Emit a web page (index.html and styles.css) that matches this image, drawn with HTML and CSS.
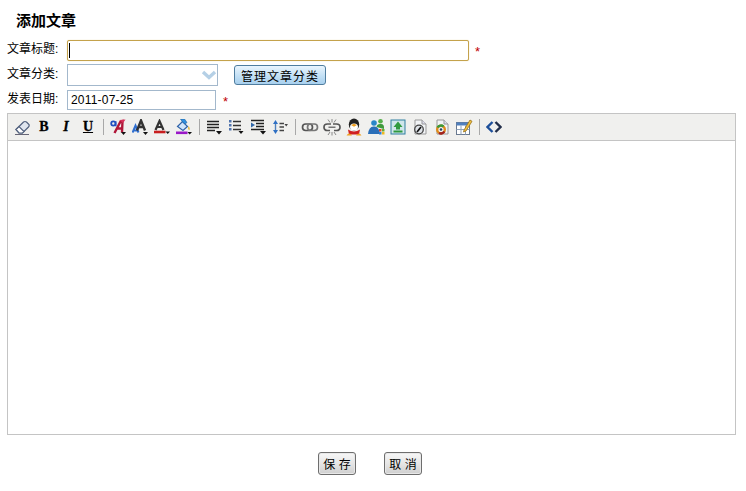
FILE: index.html
```html
<!DOCTYPE html>
<html lang="zh-CN">
<head>
<meta charset="utf-8">
<title>添加文章</title>
<link rel="stylesheet" href="styles.css">
</head>
<body>
<form class="page">
  <h1 class="title">添加文章</h1>
  <div class="row row-title">
    <label class="label">文章标题:</label>
    <input class="field field-title" type="text">
    <span class="req req-title">*</span>
  </div>
  <div class="row row-cat">
    <label class="label">文章分类:</label>
    <div class="select">
      <svg width="16" height="10" viewBox="0 0 16 10"><path d="M2 2 L8 7.500 L14 2" fill="none" stroke="#b5d0e6" stroke-width="3.400"/></svg>
    </div>
    <button class="btn-manage" type="button">管理文章分类</button>
  </div>
  <div class="row row-date">
    <label class="label">发表日期:</label>
    <input class="field field-date" type="text" value="2011-07-25">
    <span class="req req-date">*</span>
  </div>

  <div class="editor">
    <div class="toolbar">
      <span class="tool"><svg viewBox="0 0 16 16"><path d="M1 15.500 H15" stroke="#667" stroke-width="1"/><path d="M2 10.500 L9.500 3 Q11 2 12.500 3 L15 5.500 Q15.500 7 14.500 8 L8.500 14 H5 Z" fill="#dfe5ee" stroke="#4f5f7c" stroke-width="1.200"/><path d="M2 10.500 L5 7.500 L10 12.500 L8.500 14 H5 Z" fill="#fff" stroke="#4f5f7c" stroke-width="1.200"/></svg></span>
      <span class="tool tool-text tool-b">B</span>
      <span class="tool tool-text tool-i">I</span>
      <span class="tool tool-text tool-u">U</span>
      <span class="sep"></span>
      <span class="tool"><svg viewBox="0 0 16 16"><path d="M4.500 14 L10.500 2.500 L12.500 2 L12 13.500 M7 9.500 H13" fill="none" stroke="#b01638" stroke-width="2.400"/><path d="M9.500 1 L15.500 0.500 L13 4 Z" fill="#d8315a"/><circle cx="3.300" cy="4.500" r="2.100" fill="none" stroke="#1f50c0" stroke-width="1.800"/><path d="M5.800 2.200 V7.200" stroke="#1f50c0" stroke-width="1.500"/><path d="M11 13 H16 L13.500 16 Z" fill="#111"/></svg></span>
      <span class="tool"><svg viewBox="0 0 16 16"><path d="M0.500 13.500 L3.500 6.500 L6.500 13.500 M1.500 11.500 H5.500" fill="none" stroke="#2f6fd0" stroke-width="2"/><path d="M5 11.500 L9 1.500 L13 11.500 M6.500 8 H11.500" fill="none" stroke="#333" stroke-width="2.400"/><path d="M11 13 H16 L13.500 16 Z" fill="#111"/></svg></span>
      <span class="tool"><svg viewBox="0 0 16 16"><path d="M1.500 11 L5.500 2 L9.500 11 M3 8 H8" fill="none" stroke="#333" stroke-width="2.200"/><path d="M0 13 H11.500" stroke="#c81e1e" stroke-width="2.600"/><path d="M11.500 12.500 H16 L13.700 15 Z" fill="#111"/></svg></span>
      <span class="tool"><svg viewBox="0 0 16 16"><path d="M1.500 7.500 L6.500 2.500 L11.500 7.500 L7 11.500 Z" fill="#cfe4fa" stroke="#2f62a8" stroke-width="1.200"/><path d="M6.500 3 L4.500 0 H8.500 L11 3.500 L9 5 Z" fill="#2f8fe0" stroke="#1f5f9c" stroke-width=".6"/><path d="M12.500 7 Q14.500 9.500 13.500 11 Q11.500 11 12.500 7Z" fill="#e8b020"/><path d="M0 13.800 H11.500" stroke="#9a18c8" stroke-width="2.600"/><path d="M11.500 13 H16 L13.700 15.500 Z" fill="#111"/></svg></span>
      <span class="sep"></span>
      <span class="tool"><svg viewBox="0 0 16 16"><path d="M1 2.500 H13 M1 5.500 H13 M1 8.500 H13 M1 11.500 H9" stroke="#222" stroke-width="1.500"/><path d="M10 12 H16 L13 15.500 Z" fill="#111"/></svg></span>
      <span class="tool"><svg viewBox="0 0 16 16"><path d="M5 2.500 H13 M5 6.500 H13 M5 10.500 H13" stroke="#333" stroke-width="1.400"/><path d="M1 1 h2.500 v2.500 h-2.500z M1 5 h2.500 v2.500 h-2.500z M1 9 h2.500 v2.500 h-2.500z" fill="#4f73ad"/><path d="M10.500 12 H15.500 L13 15 Z" fill="#111"/></svg></span>
      <span class="tool"><svg viewBox="0 0 16 16"><path d="M1 1.500 H14 M6 4.500 H14 M6 7.500 H14 M1 10.500 H14" stroke="#222" stroke-width="1.500"/><path d="M1 3.500 L5 6 L1 8.500 Z" fill="#2f66a8"/><path d="M10 12 H16 L13 15.500 Z" fill="#111"/></svg></span>
      <span class="tool"><svg viewBox="0 0 16 16"><path d="M3.500 3 V13" stroke="#4f80bd" stroke-width="1.400"/><path d="M1 5 L3.500 1 L6 5 Z M1 11 L3.500 15 L6 11 Z" fill="#2f70c4"/><path d="M7.500 4.500 H12 M7.500 8 H12 M7.500 11.500 H12" stroke="#444" stroke-width="1.300"/><path d="M12.500 5 H16 L14.200 7.500 Z" fill="#444"/></svg></span>
      <span class="sep"></span>
      <span class="tool tool-wide"><svg viewBox="0 0 18 18"><rect x="1.500" y="6" width="10" height="6.500" rx="3.200" fill="none" stroke="#555" stroke-width="1.700"/><rect x="6.500" y="6" width="10" height="6.500" rx="3.200" fill="none" stroke="#777" stroke-width="1.700"/></svg></span>
      <span class="tool tool-wide"><svg viewBox="0 0 18 18"><path d="M8 6 H4.500 Q1 6 1 9.200 Q1 12.500 4.500 12.500 H7 M10 6 H13.500 Q17 6 17 9.200 Q17 12.500 13.500 12.500 H11" fill="none" stroke="#555" stroke-width="1.700"/><path d="M5.500 9.200 H12.500" stroke="#555" stroke-width="1.200"/><path d="M9 1 V4.500 M9 14 V17.500 M5 1.500 L7 4.500 M13 1.500 L11 4.500 M5 17 L7 14 M13 17 L11 14" stroke="#888"/></svg></span>
      <span class="tool tool-wide"><svg viewBox="0 0 18 18"><ellipse cx="9" cy="6.500" rx="5.200" ry="6" fill="#222"/><ellipse cx="9" cy="9" rx="4" ry="3.600" fill="#fff"/><path d="M6 7 L9 8.800 L12 7 L9 5.800 Z" fill="#f0a020"/><path d="M3 11.500 Q9 15.500 15 11.500 L14 16.500 H4 Z" fill="#d02020"/><path d="M1.500 17.500 Q4 13.500 7 17.500 Z M11 17.500 Q14 13.500 16.500 17.500 Z" fill="#f0a020"/></svg></span>
      <span class="tool tool-wide"><svg viewBox="0 0 18 18"><circle cx="7" cy="5" r="2.800" fill="#2a86c8"/><path d="M1 16 Q2 8 7 8.500 Q12 8 13 16 Z" fill="#2a6fb8"/><circle cx="13.500" cy="3.300" r="2.300" fill="#55b04a"/><path d="M9.500 9 Q10 5.500 14 6 Q17.500 6 17 11 Z" fill="#3f9a3c"/><rect x="12" y="11" width="2.500" height="2.500" fill="#e04a2a"/><rect x="15" y="11" width="2.500" height="2.500" fill="#66b030"/><rect x="12" y="14" width="2.500" height="2.500" fill="#2f7fd0"/><rect x="15" y="14" width="2.500" height="2.500" fill="#f0b820"/></svg></span>
      <span class="tool"><svg viewBox="0 0 16 16"><rect x="1" y="1" width="14" height="14" fill="#cfe6ea" stroke="#2f7f9f"/><path d="M8 2.500 L12.500 8 H10 V10.500 H6 V8 H3.500 Z" fill="#2f9a3f"/><path d="M3.500 12.500 H12.500" stroke="#2f9a3f" stroke-width="2"/></svg></span>
      <span class="tool"><svg viewBox="0 0 16 16"><path d="M3 1 H10 L14 5 V15 H3 Z" fill="#f2f4f6" stroke="#999"/><path d="M10 1 V5 H14" fill="#dde" stroke="#999"/><circle cx="7" cy="10.500" r="4.300" fill="#dfe3e8" stroke="#444" stroke-width="1.300"/><path d="M5 13 L9 8" stroke="#111" stroke-width="1.700"/></svg></span>
      <span class="tool"><svg viewBox="0 0 16 16"><path d="M3 1 H10 L14 5 V15 H3 Z" fill="#f2f4f6" stroke="#999"/><path d="M10 1 V5 H14" fill="#dde" stroke="#999"/><circle cx="7" cy="10.500" r="3.800" fill="none" stroke="#e08a1a" stroke-width="2.400"/><path d="M3.500 8.500 A4 4 0 0 1 9.500 7.500" fill="none" stroke="#3a9a3a" stroke-width="2.400"/><path d="M10.300 12.500 A4 4 0 0 1 5 14" fill="none" stroke="#a02020" stroke-width="2.400"/><circle cx="7" cy="10.500" r="1.300" fill="#246"/></svg></span>
      <span class="tool tool-wide"><svg viewBox="0 0 18 18"><rect x="1.500" y="4.500" width="13" height="12" fill="#fff" stroke="#6a7a90"/><path d="M1.500 4.500 h13 v3 h-13z" fill="#4f7fbd"/><path d="M1.500 11.500 H14.500 M6 7.500 V16.500 M10.500 7.500 V16.500" stroke="#8fa3ba"/><path d="M9 12 L15 2 L17 3.300 L11 13 L8.500 14 Z" fill="#f0c040" stroke="#987018" stroke-width=".8"/></svg></span>
      <span class="sep"></span>
      <span class="tool"><svg viewBox="0 0 16 16"><path d="M6.500 3 L1.500 8 L6.500 13" fill="none" stroke="#1d4f9a" stroke-width="2.400"/><path d="M9.500 3 L14.500 8 L9.500 13" fill="none" stroke="#222e4a" stroke-width="2.400"/></svg></span>
    </div>
    <div class="editor-body"></div>
  </div>

  <div class="actions">
    <button class="btn-action" type="button">保 存</button>
    <button class="btn-action" type="button">取 消</button>
  </div>
</form>
</body>
</html>
```

FILE: styles.css
```css
* { box-sizing: border-box; }

html, body {
  margin: 0;
  background: #fff;
}

body {
  font-family: "Liberation Sans", "Noto Sans CJK SC", sans-serif;
  font-size: 12px;
  color: #000;
  overflow: hidden;
}

.page {
  width: 746px;
  height: 491px;
  padding: 12px 10px 0 7px;
}

.title {
  margin: 0 0 0 9px;
  height: 17px;
  font-size: 15px;
  line-height: 17px;
  font-weight: bold;
}

.row {
  display: flex;
  align-items: center;
}

.row-title { margin-top: 11px; height: 21px; }
.row-cat { margin-top: 3px; height: 22px; }
.row-date { margin-top: 4px; height: 20px; }

.label {
  width: 60px;
  flex: none;
  line-height: 16px;
  padding-bottom: 3px;
  height: 19px;
}

.field {
  height: 20px;
  padding: 1px 3px;
  font: 12px "Liberation Sans", "Noto Sans CJK SC", sans-serif;
  letter-spacing: .2px;
  color: #000;
  border: 1px solid #a3b8cc;
  background: #fff;
  outline: none;
}

.field-title {
  width: 402px;
  height: 21px;
  border: 1px solid #c4a24c;
  border-radius: 2px;
  box-shadow: 0 0 1px #e0c880;
  background: linear-gradient(#000, #000) 1px 2px / 1px 15px no-repeat #fff;
}

.field-date { width: 149px; }

.req {
  color: #c00000;
  font-size: 13px;
  line-height: 13px;
  padding-top: 2px;
}

.req-title { margin-left: 6px; }
.req-date { margin-left: 7px; }

.select {
  width: 151px;
  height: 22px;
  display: flex;
  align-items: center;
  justify-content: flex-end;
  border: 1px solid #a3b8cc;
  background: #fff;
}

.btn-manage {
  margin-left: 16px;
  width: 92px;
  height: 20px;
  padding: 0;
  font: 12px "Liberation Sans", "Noto Sans CJK SC", sans-serif;
  letter-spacing: 1px;
  color: #000;
  border: 1px solid #4f7d9f;
  border-radius: 3px;
  background: linear-gradient(#eaf5fd, #c3e0f5 55%, #a8d0ee);
}

.editor {
  width: 729px;
  height: 322px;
  margin-top: 3px;
  display: flex;
  flex-direction: column;
  border: 1px solid #c4c4c4;
}

.toolbar {
  height: 27px;
  flex: none;
  display: flex;
  align-items: center;
  padding-left: 3px;
  background: #f0f0ee;
  border-bottom: 1px solid #c4c4c4;
}

.tool {
  width: 22px;
  height: 18px;
  flex: none;
  display: flex;
  align-items: center;
  justify-content: center;
}

.tool svg {
  width: 16px;
  height: 16px;
  display: block;
}

.tool-wide svg {
  width: 18px;
  height: 18px;
}

.tool-text {
  font-family: "Liberation Serif", serif;
  font-weight: 900;
  font-size: 14px;
  color: #000;
  -webkit-text-stroke: .3px #000;
}

.tool-i { font-style: italic; }
.tool-u { text-decoration: underline; }

.sep {
  width: 1px;
  height: 16px;
  flex: none;
  margin: 0 3px 0 4px;
  background: #a8a8a8;
}

.editor-body {
  flex: 1;
  background: #fff;
}

.actions {
  margin-top: 17px;
  display: flex;
  gap: 28px;
  padding-left: 311px;
}

.btn-action {
  width: 38px;
  height: 23px;
  padding: 0;
  font: 12px "Liberation Sans", "Noto Sans CJK SC", sans-serif;
  color: #000;
  border: 1px solid #6e6e6e;
  border-radius: 3px;
  box-shadow: inset 0 0 0 1px #e8e8e8;
  background: linear-gradient(#f7f7f7, #e6e6e6 50%, #cfcfcf);
}
```
